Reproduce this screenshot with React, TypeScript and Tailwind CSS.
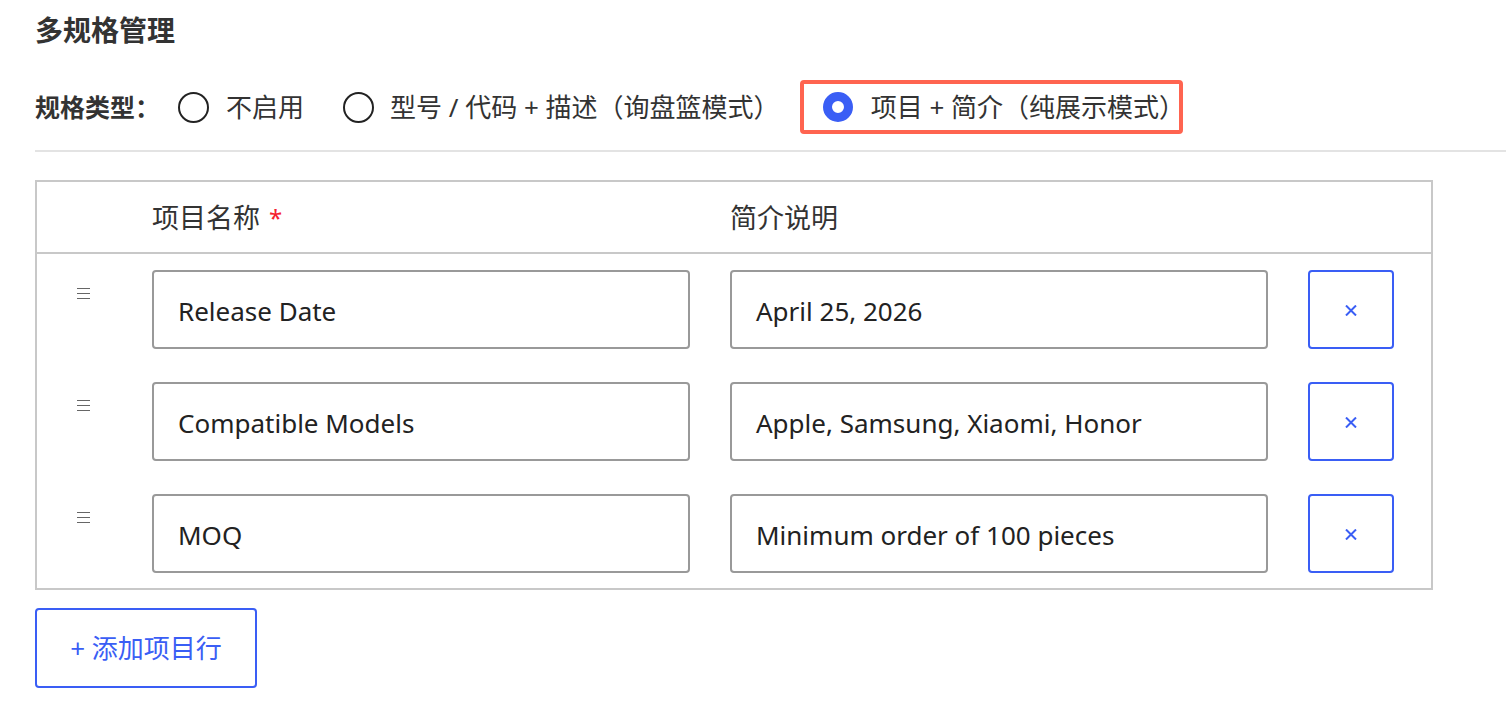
const font = "font-['Noto_Sans','Noto_Sans_CJK_SC',sans-serif]";

const rows = [
  { name: "Release Date", desc: "April 25, 2026" },
  { name: "Compatible Models", desc: "Apple, Samsung, Xiaomi, Honor" },
  { name: "MOQ", desc: "Minimum order of 100 pieces" },
];

function Radio({ checked }: { checked?: boolean }) {
  if (checked) {
    return <span className="box-border block h-[30px] w-[30px] shrink-0 rounded-full border-[9px] border-[#3a5ef5] bg-white" />;
  }
  return <span className="box-border block h-[31px] w-[31px] shrink-0 rounded-full border-2 border-[#222]" />;
}

function DragHandle() {
  return (
    <svg width="13" height="11" viewBox="0 0 13 11" className="block">
      <path d="M0 0.5H13M0 5.5H13M0 10.5H13" stroke="#666" strokeWidth="1" />
    </svg>
  );
}

function App() {
  return (
    <div className={`min-h-screen bg-white pl-[35px] pt-[10px] text-[#333] ${font}`}>
      {/* Title */}
      <h2 className="text-[28px] font-bold leading-[40px] text-[#333]">多规格管理</h2>

      {/* Spec type */}
      <div className="mt-[30px] flex h-[54px] items-center">
        <span className="text-[25px] font-bold leading-none">规格类型：</span>
        <label className="ml-[18px] flex items-center">
          <Radio />
          <span className="ml-[17px] text-[26px] leading-none">不启用</span>
        </label>
        <label className="ml-[39px] flex items-center">
          <Radio />
          <span className="ml-[16px] text-[26px] leading-none">型号 / 代码 + 描述（询盘篮模式）</span>
        </label>
        <label className="ml-[20px] flex h-[54px] w-[383px] items-center whitespace-nowrap rounded-[4px] border-4 border-[#ff6450] pl-[19px]">
          <Radio checked />
          <span className="ml-[18px] text-[26px] leading-none">项目 + 简介（纯展示模式）</span>
        </label>
      </div>

      <div className="mt-[16px] h-[2px] bg-[#e3e3e3]" />

      {/* Table */}
      <div className="mt-[28px] w-[1398px] border-2 border-[#c8c8c8]">
        <div className="flex h-[72px] items-center border-b-2 border-[#c8c8c8] pt-[2px] text-[27px]">
          <div className="w-[115px]" />
          <div className="flex w-[578px] items-center">
            项目名称<span className="ml-[9px] text-[24px] text-[#f5222d]">*</span>
          </div>
          <div>简介说明</div>
        </div>
        <div className="flex flex-col gap-[33px] pb-[15px] pt-[16px]">
          {rows.map((r) => (
            <div key={r.name} className="flex">
              <div className="w-[115px] pl-[40px] pt-[18px]">
                <DragHandle />
              </div>
              <div className="flex h-[79px] w-[538px] items-center rounded-[4px] border-2 border-[#999] pl-[24px] pt-[3px] text-[26px] text-[#222]">
                {r.name}
              </div>
              <div className="ml-[40px] flex h-[79px] w-[538px] items-center rounded-[4px] border-2 border-[#999] pl-[24px] pt-[3px] text-[26px] text-[#222]">
                {r.desc}
              </div>
              <button className="ml-[40px] flex h-[79px] w-[86px] items-center justify-center rounded-[4px] border-2 border-[#3a5ef5] bg-white pt-[2px]">
                <svg width="12" height="11" viewBox="0 0 12 11">
                  <path d="M1 0.5L11 10.5M11 0.5L1 10.5" stroke="#3a5ef5" strokeWidth="2" />
                </svg>
              </button>
            </div>
          ))}
        </div>
      </div>

      {/* Add row */}
      <button className="mt-[18px] flex h-[80px] w-[222px] items-center justify-center rounded-[4px] border-2 border-[#3a5ef5] bg-white text-[26px] text-[#3a5ef5]">
        + 添加项目行
      </button>
    </div>
  );
}

export default App;
